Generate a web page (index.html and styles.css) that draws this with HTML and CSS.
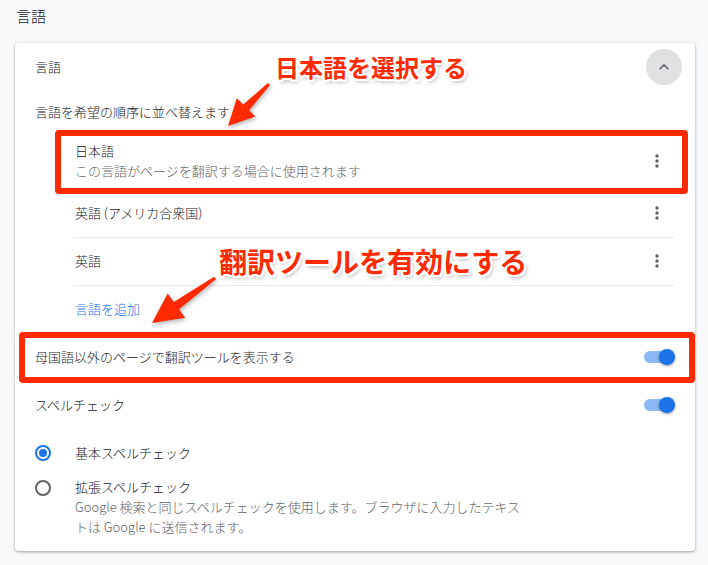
FILE: index.html
```html
<!DOCTYPE html>
<html lang="ja">
<head>
    <meta charset="UTF-8">
    <title>言語設定</title>
    <link rel="stylesheet" href="styles.css">
</head>
<body>
    <h2 class="page-title">言語</h2>

    <div class="card">
        <div class="card-header">
            <span>言語</span>
            <button class="icon-btn">
                <svg width="20" height="20" viewBox="0 0 24 24"><path d="M12 8l-6 6 1.41 1.41L12 10.83l4.59 4.58L18 14z" fill="#5f6368"/></svg>
            </button>
        </div>
        <div class="row-label">言語を希望の順序に並べ替えます</div>

        <ul class="lang-list">
            <li class="lang-item two-line">
                <div>
                    <div>日本語</div>
                    <div class="secondary">この言語がページを翻訳する場合に使用されます</div>
                </div>
                <svg class="more" width="20" height="20" viewBox="0 0 24 24"><path d="M12 8c1.1 0 2-.9 2-2s-.9-2-2-2-2 .9-2 2 .9 2 2 2zm0 2c-1.1 0-2 .9-2 2s.9 2 2 2 2-.9 2-2-.9-2-2-2zm0 6c-1.1 0-2 .9-2 2s.9 2 2 2 2-.9 2-2-.9-2-2-2z" fill="#5f6368"/></svg>
            </li>
            <li class="lang-item">
                <div>英語 (アメリカ合衆国)</div>
                <svg class="more" width="20" height="20" viewBox="0 0 24 24"><path d="M12 8c1.1 0 2-.9 2-2s-.9-2-2-2-2 .9-2 2 .9 2 2 2zm0 2c-1.1 0-2 .9-2 2s.9 2 2 2 2-.9 2-2-.9-2-2-2zm0 6c-1.1 0-2 .9-2 2s.9 2 2 2 2-.9 2-2-.9-2-2-2z" fill="#5f6368"/></svg>
            </li>
            <li class="lang-item">
                <div>英語</div>
                <svg class="more" width="20" height="20" viewBox="0 0 24 24"><path d="M12 8c1.1 0 2-.9 2-2s-.9-2-2-2-2 .9-2 2 .9 2 2 2zm0 2c-1.1 0-2 .9-2 2s.9 2 2 2 2-.9 2-2-.9-2-2-2zm0 6c-1.1 0-2 .9-2 2s.9 2 2 2 2-.9 2-2-.9-2-2-2z" fill="#5f6368"/></svg>
            </li>
            <li class="lang-item">
                <a class="link">言語を追加</a>
            </li>
        </ul>

        <div class="setting-row">
            <span>母国語以外のページで翻訳ツールを表示する</span>
            <span class="toggle"><span class="track"></span><span class="knob"></span></span>
        </div>
        <div class="setting-row">
            <span>スペルチェック</span>
            <span class="toggle"><span class="track"></span><span class="knob"></span></span>
        </div>

        <div class="radio-row">
            <span class="radio checked"></span>
            <span>基本スペルチェック</span>
        </div>
        <div class="radio-row multi">
            <span class="radio"></span>
            <div>
                <div>拡張スペルチェック</div>
                <div class="secondary">Google 検索と同じスペルチェックを使用します。ブラウザに入力したテキス<br>トは Google に送信されます。</div>
            </div>
        </div>

        <!-- annotation boxes -->
        <div class="mark mark-lang"></div>
        <div class="mark mark-translate"></div>
    </div>

    <!-- annotations -->
    <div class="note note-1">日本語を選択する</div>
    <div class="note note-2">翻訳ツールを有効にする</div>
    <svg class="arrows" width="708" height="565" viewBox="0 0 708 565">
        <polygon points="270.1,85 249,110.2 255.4,116.5 228,126 236.8,98.3 243.2,104.6 267.9,83" fill="#ff2a00"/>
        <polygon points="215.9,279.2 179,309.3 185.1,317.8 152,323 167.7,293.4 173.8,301.9 214.1,276.8" fill="#ff2a00"/>
    </svg>
</body>
</html>
```

FILE: styles.css
```css
body {
    margin: 0;
    background: #f8f9fa;
    font-family: "Noto Sans CJK JP", sans-serif;
    font-size: 13px;
    font-weight: 300;
    color: #202124;
    position: relative;
    width: 708px;
    height: 565px;
    overflow: hidden;
}
.page-title {
    margin: 0;
    padding: 6px 16px 17px;
    font-size: 15px;
    font-weight: 300;
    line-height: 20px;
}
.card {
    position: relative;
    margin: 0 13px 0 15px;
    height: 508px;
    box-sizing: border-box;
    background: white;
    border-radius: 4px;
    box-shadow: 0 1px 2px rgba(60, 64, 67, 0.3), 0 1px 3px 1px rgba(60, 64, 67, 0.15);
}
.card-header {
    height: 48px;
    box-sizing: border-box;
    padding: 0 13px 1px 20px;
    display: flex;
    justify-content: space-between;
    align-items: center;
}
.icon-btn {
    width: 36px;
    height: 36px;
    border: none;
    border-radius: 50%;
    background: #dfe0e2;
    padding: 0;
    display: flex;
    justify-content: center;
    align-items: center;
}
.row-label {
    height: 44px;
    line-height: 42px;
    padding: 0 20px;
    box-sizing: border-box;
}
.lang-list {
    list-style: none;
    margin: 0 20px 0 60px;
    padding: 0;
}
.lang-item {
    height: 48px;
    box-sizing: border-box;
    padding-bottom: 2px;
    display: flex;
    justify-content: space-between;
    align-items: center;
    border-top: 1px solid #e8eaed;
}
.lang-item.two-line {
    height: 54px;
    border-top: none;
    line-height: 20px;
}
.more {
    margin-right: 8px;
}
.secondary {
    color: #5f6368;
    line-height: 20px;
}
.link {
    color: #1a73e8;
}
.setting-row {
    height: 48px;
    box-sizing: border-box;
    padding: 0 20px 1px;
    display: flex;
    justify-content: space-between;
    align-items: center;
}
.toggle {
    position: relative;
    width: 31px;
    height: 16px;
}
.toggle .track {
    position: absolute;
    left: 0;
    top: 2px;
    width: 28px;
    height: 12px;
    border-radius: 6px;
    background: rgba(26, 115, 232, 0.5);
}
.toggle .knob {
    position: absolute;
    right: 0;
    top: 0;
    width: 16px;
    height: 16px;
    border-radius: 50%;
    background: #1a73e8;
    box-shadow: 0 1px 3px rgba(0, 0, 0, 0.4);
}
.radio-row {
    height: 48px;
    box-sizing: border-box;
    padding: 0 20px 1px;
    display: flex;
    align-items: center;
}
.radio-row.multi {
    height: auto;
    padding-top: 0;
    align-items: flex-start;
    line-height: 20px;
}
.radio {
    width: 16px;
    height: 16px;
    box-sizing: border-box;
    border: 2px solid #5f6368;
    border-radius: 50%;
    margin-right: 24px;
    flex-shrink: 0;
    display: flex;
    justify-content: center;
    align-items: center;
}
.radio-row.multi .radio {
    margin-top: 3px;
}
.radio.checked {
    border-color: #1a73e8;
}
.radio.checked::after {
    content: "";
    width: 8px;
    height: 8px;
    border-radius: 50%;
    background: #1a73e8;
}
.mark {
    position: absolute;
    box-sizing: border-box;
    border: 6px solid #ff2a00;
    border-radius: 4px;
}
.mark-lang {
    left: 40px;
    top: 87px;
    width: 633px;
    height: 64px;
}
.mark-translate {
    left: 4px;
    top: 289px;
    width: 676px;
    height: 51px;
}
.note {
    position: absolute;
    color: #ff2a00;
    font-weight: bold;
    white-space: nowrap;
    text-shadow: -2px -2px 0 #fff, 2px -2px 0 #fff, -2px 2px 0 #fff, 2px 2px 0 #fff,
        0 -2px 0 #fff, 0 2px 0 #fff, -2px 0 0 #fff, 2px 0 0 #fff,
        2px 3px 4px rgba(0, 0, 0, 0.35);
}
.note-1 {
    left: 275px;
    top: 52px;
    font-size: 24px;
    line-height: 30px;
}
.note-2 {
    left: 219px;
    top: 244px;
    font-size: 28px;
    line-height: 34px;
}
.arrows {
    position: absolute;
    left: 0;
    top: 0;
    pointer-events: none;
    filter: drop-shadow(1px 2px 2px rgba(0, 0, 0, 0.3));
}
```
